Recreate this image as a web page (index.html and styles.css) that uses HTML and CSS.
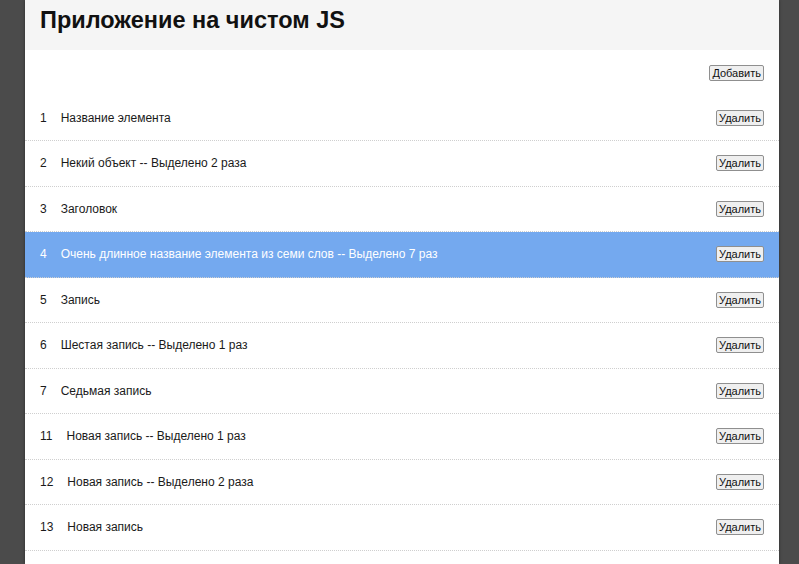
FILE: index.html
```html
<!DOCTYPE html>
<html lang="ru">
<head>
<meta charset="utf-8">
<title>Приложение на чистом JS</title>
<link rel="stylesheet" href="styles.css">
</head>
<body>
<div class="app">
  <header class="header"><h1 class="title">Приложение на чистом JS</h1></header>
  <div class="toolbar"><button class="btn">Добавить</button></div>
  <ul class="list">
    <li class="item"><span class="num">1</span><span class="name">Название элемента</span><button class="btn">Удалить</button></li>
    <li class="item"><span class="num">2</span><span class="name">Некий объект -- Выделено 2 раза</span><button class="btn">Удалить</button></li>
    <li class="item"><span class="num">3</span><span class="name">Заголовок</span><button class="btn">Удалить</button></li>
    <li class="item selected"><span class="num">4</span><span class="name">Очень длинное название элемента из семи слов -- Выделено 7 раз</span><button class="btn">Удалить</button></li>
    <li class="item"><span class="num">5</span><span class="name">Запись</span><button class="btn">Удалить</button></li>
    <li class="item"><span class="num">6</span><span class="name">Шестая запись -- Выделено 1 раз</span><button class="btn">Удалить</button></li>
    <li class="item"><span class="num">7</span><span class="name">Седьмая запись</span><button class="btn">Удалить</button></li>
    <li class="item"><span class="num">11</span><span class="name">Новая запись -- Выделено 1 раз</span><button class="btn">Удалить</button></li>
    <li class="item"><span class="num">12</span><span class="name">Новая запись -- Выделено 2 раза</span><button class="btn">Удалить</button></li>
    <li class="item"><span class="num">13</span><span class="name">Новая запись</span><button class="btn">Удалить</button></li>
  </ul>
</div>
</body>
</html>
```
FILE: styles.css
```css
html, body {
  margin: 0;
  padding: 0;
}
body {
  background: #4b4b4b;
  font-family: "Liberation Sans", Arial, sans-serif;
  color: #1a1a1a;
  height: 564px;
  overflow: hidden;
}
.app {
  width: 754px;
  margin-left: 25px;
  background: #fff;
  min-height: 564px;
  box-shadow: 0 0 3px rgba(0, 0, 0, 0.45);
}
.header {
  background: #f5f5f5;
  padding: 6px 15px 16px;
}
.title {
  margin: 0;
  font-size: 23.5px;
  line-height: 28px;
  font-weight: bold;
  color: #111;
}
.toolbar {
  display: flex;
  justify-content: flex-end;
  padding: 15px 15px 14.5px;
}
.btn {
  font-family: "Liberation Sans", Arial, sans-serif;
  font-size: 11px;
  line-height: 12px;
  padding: 1px 2px;
  margin: 0;
  border: 1px solid #8f8f8f;
  border-radius: 2px;
  background: #efefef;
  color: #111;
}
.list {
  list-style: none;
  margin: 0;
  padding: 0;
}
.item {
  display: flex;
  align-items: center;
  height: 44.5px;
  padding: 0 15px;
  border-bottom: 1px dotted #cfcfcf;
  font-size: 12px;
}
.item .btn {
  margin-left: auto;
}
.num {
  margin-right: 14px;
}
.selected {
  background: #74a9ef;
  color: #fff;
}
```
